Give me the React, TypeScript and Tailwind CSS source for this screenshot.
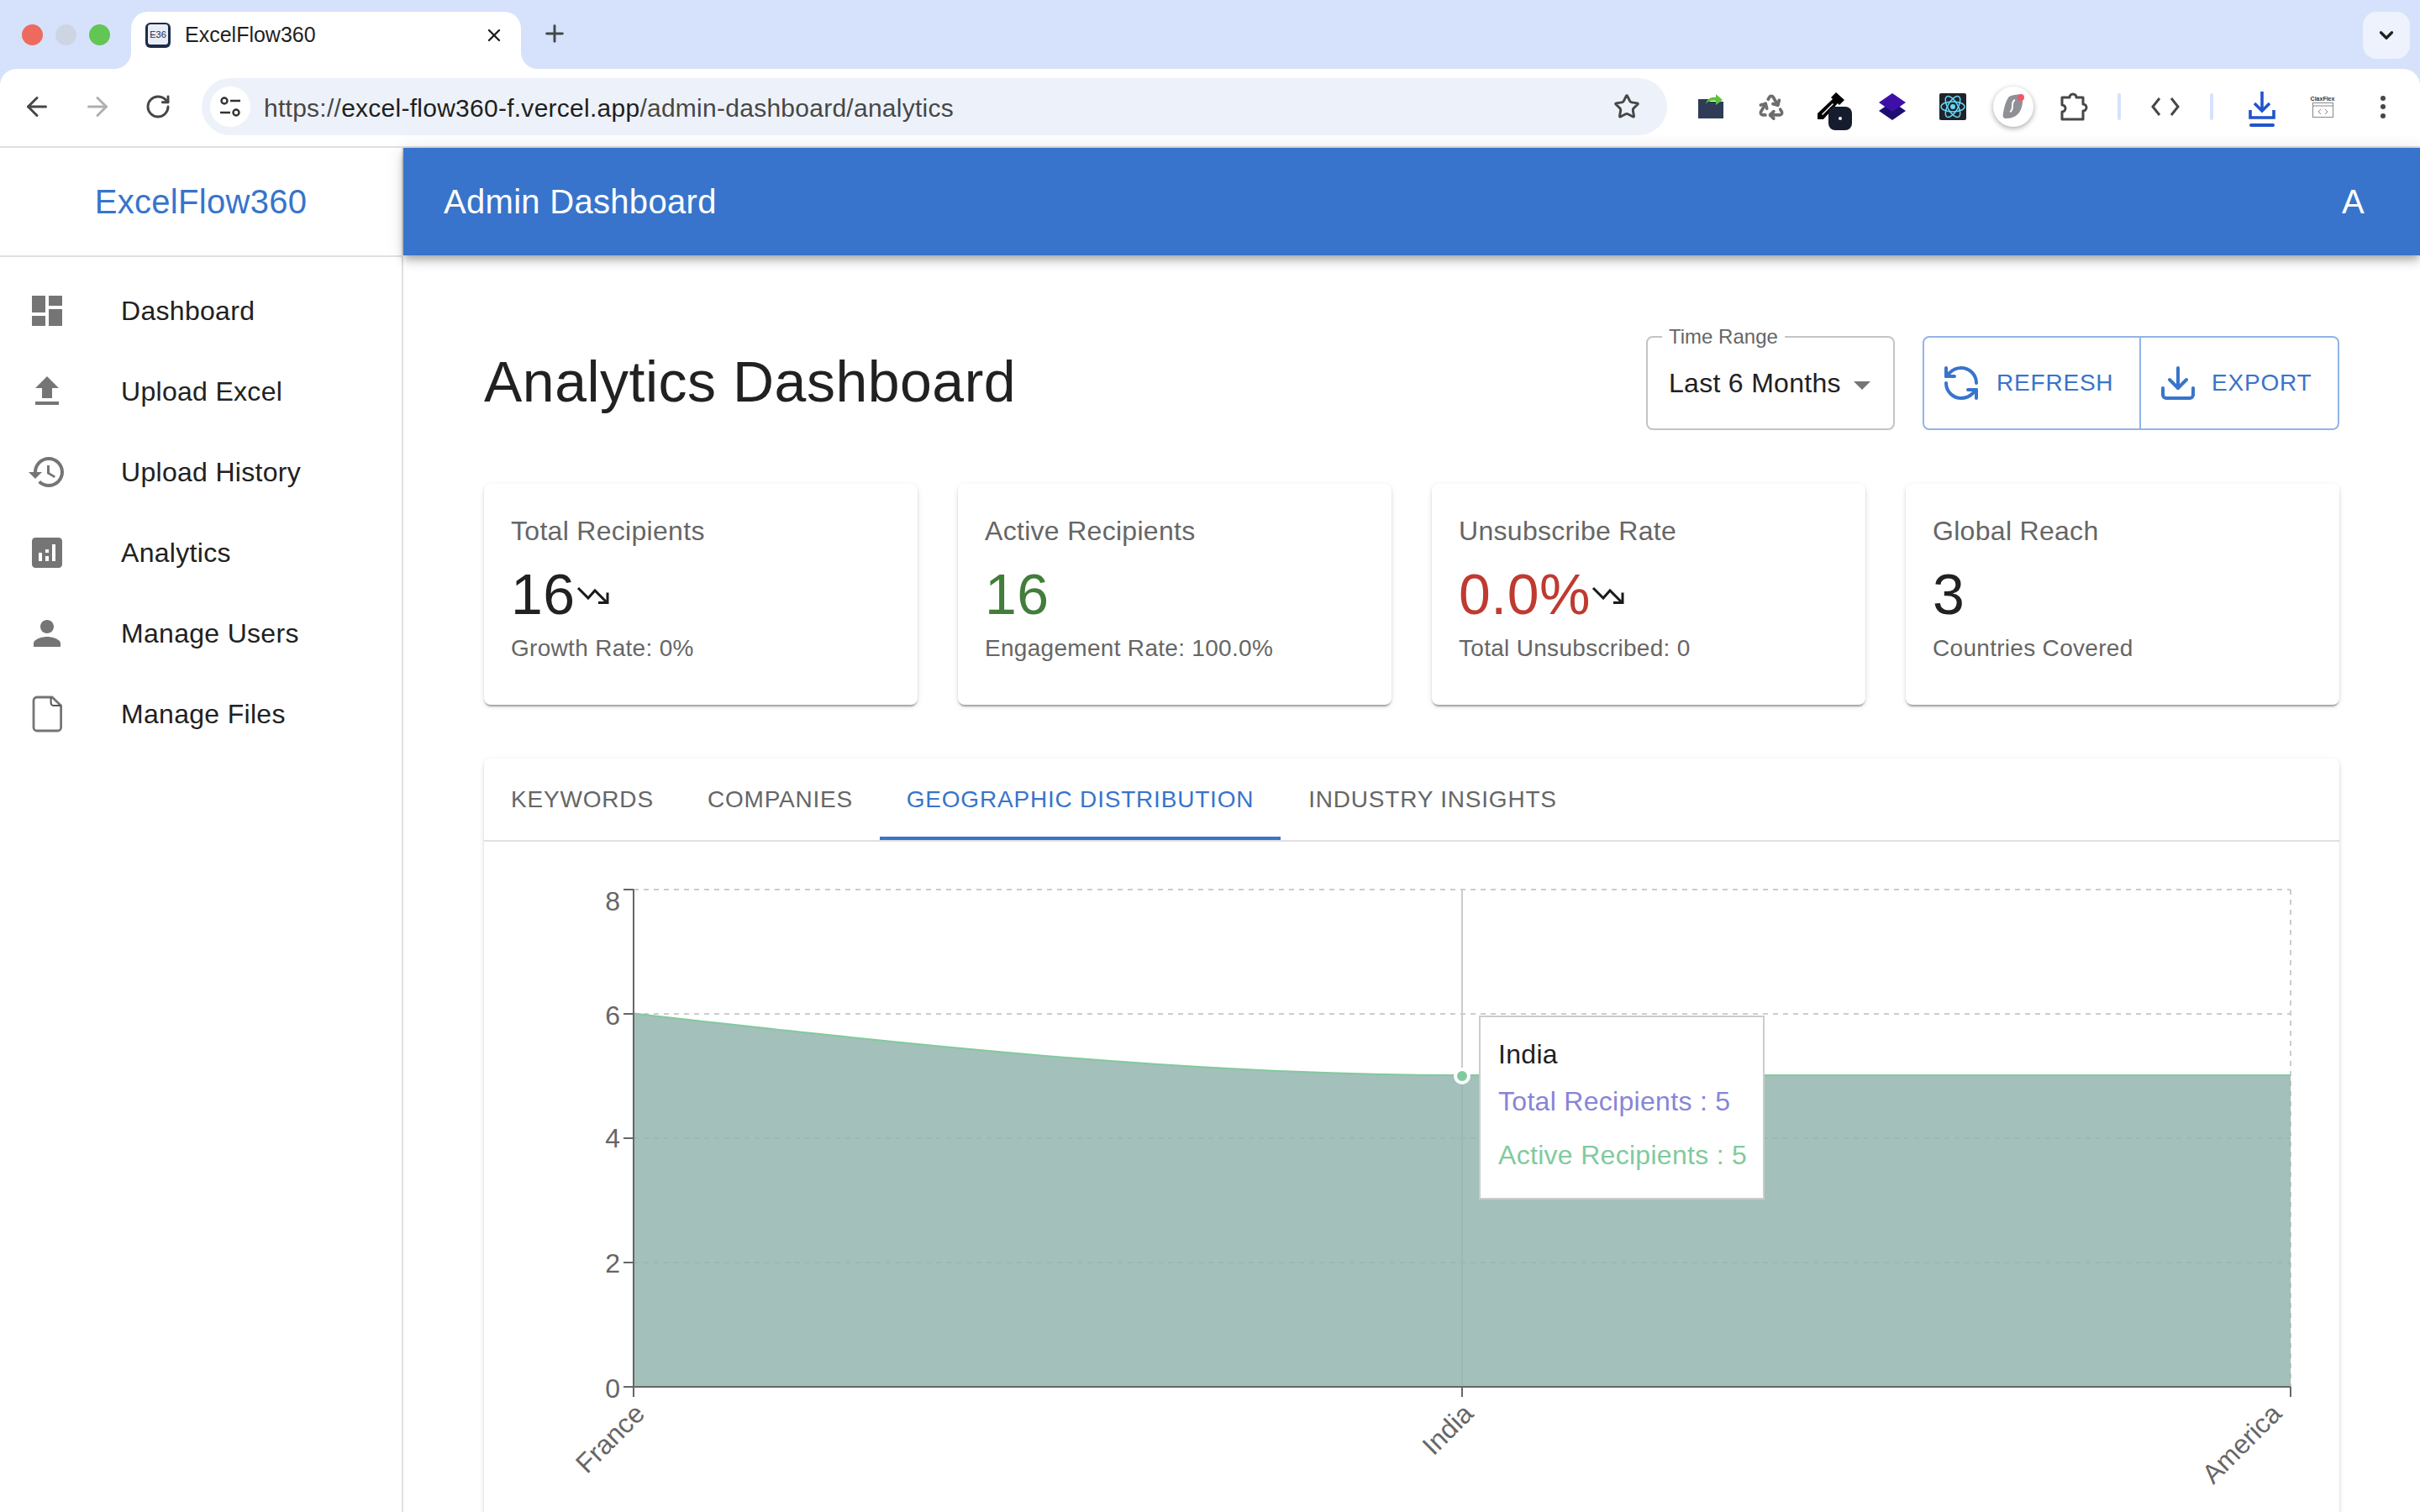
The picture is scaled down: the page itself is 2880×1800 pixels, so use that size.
import React from 'react';
import { ArrowLeft, ArrowRight, ChevronDown, Download, Plus, Recycle, RefreshCcw, RotateCw, Star, X } from 'lucide-react';

const navItems = [
  { label: 'Dashboard', path: 'M3 13h8V3H3zm0 8h8v-6H3zm10 0h8V11h-8zm0-18v6h8V3z' },
  { label: 'Upload Excel', path: 'M9 16h6v-6h4l-7-7-7 7h4zm-4 2h14v2H5z' },
  {
    label: 'Upload History',
    path: 'M13 3c-4.97 0-9 4.03-9 9H1l3.89 3.89.07.14L9 12H6c0-3.87 3.13-7 7-7s7 3.13 7 7-3.13 7-7 7c-1.93 0-3.68-.79-4.94-2.06l-1.42 1.42C8.27 19.99 10.51 21 13 21c4.97 0 9-4.03 9-9s-4.03-9-9-9zm-1 5v5l4.28 2.54.72-1.21-3.5-2.08V8H12z',
  },
  {
    label: 'Analytics',
    path: 'M19 3H5c-1.1 0-2 .9-2 2v14c0 1.1.9 2 2 2h14c1.1 0 2-.9 2-2V5c0-1.1-.9-2-2-2zM9 17H7v-5h2v5zm4 0h-2v-3h2v3zm0-5h-2v-2h2v2zm4 5h-2V7h2v10z',
  },
  { label: 'Manage Users', path: 'M12 12c2.21 0 4-1.79 4-4s-1.79-4-4-4-4 1.79-4 4 1.79 4 4 4zm0 2c-2.67 0-8 1.34-8 4v2h16v-2c0-2.66-5.33-4-8-4z' },
];

const stats = [
  { label: 'Total Recipients', value: '16', color: 'text-[#212121]', sub: 'Growth Rate: 0%', trend: true },
  { label: 'Active Recipients', value: '16', color: 'text-[#427d3b]', sub: 'Engagement Rate: 100.0%', trend: false },
  { label: 'Unsubscribe Rate', value: '0.0%', color: 'text-[#bf3a30]', sub: 'Total Unsubscribed: 0', trend: true },
  { label: 'Global Reach', value: '3', color: 'text-[#212121]', sub: 'Countries Covered', trend: false },
];

const tabs = [
  { label: 'KEYWORDS', width: 'w-[234px]', active: false },
  { label: 'COMPANIES', width: 'w-[237px]', active: false },
  { label: 'GEOGRAPHIC DISTRIBUTION', width: 'w-[477px]', active: true },
  { label: 'INDUSTRY INSIGHTS', width: 'w-[362px]', active: false },
];

const cardShadow = 'shadow-[0_4px_2px_-2px_rgba(0,0,0,0.2),0_2px_2px_0_rgba(0,0,0,0.14),0_2px_6px_0_rgba(0,0,0,0.12)]';

const BrowserChrome: React.FC = () => (
  <div className="bg-[#d6e2fb]">
    <div className="flex h-[82px] items-start">
      <div className="flex h-[82px] w-[156px] items-start gap-[15px] pl-[26px] pt-[29px]">
        <div className="h-[25px] w-[25px] rounded-full bg-[#ee6a5f]" />
        <div className="h-[25px] w-[25px] rounded-full bg-[#cdd5e2]" />
        <div className="h-[25px] w-[25px] rounded-full bg-[#62c554]" />
      </div>
      <div className="relative mt-[14px] flex h-[68px] w-[464px] items-center rounded-t-[20px] bg-white pb-[12px] pl-[16px]">
        <div className="absolute bottom-0 left-[-20px] h-5 w-5 bg-white">
          <div className="h-5 w-5 rounded-br-[20px] bg-[#d6e2fb]" />
        </div>
        <div className="absolute bottom-0 right-[-20px] h-5 w-5 bg-white">
          <div className="h-5 w-5 rounded-bl-[20px] bg-[#d6e2fb]" />
        </div>
        <svg width="32" height="32" viewBox="0 0 32 32">
          <rect x="1" y="1" width="30" height="30" rx="6" fill="#1e2a4a" />
          <rect x="4" y="3" width="24" height="24" rx="3" fill="#e8edf5" />
          <text x="16" y="19" fontSize="11" textAnchor="middle" fill="#1e2a4a" fontFamily="Liberation Sans, sans-serif">E36</text>
        </svg>
        <span className="ml-[16px] text-[25px] text-[#1f1f1f]">ExcelFlow360</span>
        <X className="ml-auto mr-[20px] text-[#1f1f1f]" size={24} strokeWidth={2.4} />
      </div>
      <Plus className="ml-[24px] mt-[24px] text-[#444746]" size={32} strokeWidth={2.2} />
      <div className="ml-auto mr-[12px] mt-[14px] flex h-[56px] w-[56px] items-center justify-center rounded-[16px] bg-[#edf2fc]">
        <ChevronDown className="text-[#1f1f1f]" size={26} strokeWidth={3} />
      </div>
    </div>
    <div className="flex h-[94px] items-center rounded-t-[20px] border-b-2 border-[#dde1e6] bg-white pb-[2px]">
      <div className="flex w-[232px] shrink-0 items-center pl-[8px]">
        <div className="flex w-[72px] justify-center">
          <ArrowLeft className="text-[#474747]" size={36} strokeWidth={2} />
        </div>
        <div className="flex w-[72px] justify-center">
          <ArrowRight className="text-[#b0b0b0]" size={36} strokeWidth={2} />
        </div>
        <div className="flex w-[72px] justify-center">
          <RotateCw className="text-[#474747]" size={32} strokeWidth={2.2} />
        </div>
      </div>
      <div className="ml-[8px] flex h-[68px] w-[1744px] shrink-0 items-center rounded-[34px] bg-[#edf2fa] pl-[10px] pr-[32px]">
        <div className="flex h-[48px] w-[48px] items-center justify-center rounded-full bg-white">
          <svg width="28" height="28" viewBox="0 0 28 28" fill="none" stroke="#333" strokeWidth="2.4">
            <circle cx="7" cy="7" r="3.5" />
            <path d="M14 7h12M2 21h12" />
            <circle cx="21" cy="21" r="3.5" />
          </svg>
        </div>
        <span className="ml-[16px] pt-[2px] text-[30px] tracking-[0.26px] text-[#474747]">
          https://<span className="text-[#1f1f1f]">excel-flow360-f.vercel.app</span>/admin-dashboard/analytics
        </span>
        <Star className="ml-auto text-[#474747]" size={32} strokeWidth={2.2} />
      </div>
      <div className="ml-[16px] flex items-center">
        <div className="flex w-[72px] justify-center">
          <svg width="32" height="30" viewBox="0 0 32 30">
            <path d="M1 6h12l2 3h16v20H1z" fill="#2f3b57" />
            <path d="M10 12c1-6 6-9 12-8V0l8 7-8 6V8c-5-1-9 0-12 4z" fill="#5fc23c" />
          </svg>
        </div>
        <div className="flex w-[72px] justify-center">
          <Recycle className="text-[#6d6d6d]" size={34} strokeWidth={2.6} />
        </div>
        <div className="relative flex h-[48px] w-[72px] justify-center pt-[7px]">
          <svg width="32" height="32" viewBox="0 0 32 32" className="mr-[3px]">
            <path d="M22 0l10 9-6 6-2-2L7 32H0v-7L18 8l-2-2z" fill="#000" />
            <path d="M5 26l13-13 1 1L6 27z" fill="#fff" />
          </svg>
          <div className="absolute left-[32px] top-[24px] flex h-[28px] w-[28px] items-center justify-center rounded-[8px] bg-[#151c2e]">
            <div className="h-[4px] w-[4px] rounded-full bg-white" />
          </div>
        </div>
        <div className="flex w-[72px] justify-center">
          <svg width="32" height="32" viewBox="0 0 32 32">
            <path d="M0 21l16-11 16 11-16 11z" fill="#1c0f70" />
            <path d="M16 0l16 11-16 11L0 11z" fill="#3f10a8" />
          </svg>
        </div>
        <div className="flex w-[72px] justify-center">
          <svg width="32" height="32" viewBox="0 0 32 32">
            <rect width="32" height="32" rx="2" fill="#20232a" />
            <g fill="none" stroke="#61dafb" strokeWidth="1.5">
              <ellipse cx="16" cy="16" rx="14" ry="6" />
              <ellipse cx="16" cy="16" rx="14" ry="6" transform="rotate(60 16 16)" />
              <ellipse cx="16" cy="16" rx="14" ry="6" transform="rotate(120 16 16)" />
            </g>
            <circle cx="16" cy="16" r="3" fill="#61dafb" />
          </svg>
        </div>
        <div className="flex w-[72px] justify-center">
          <div className="flex h-[48px] w-[48px] items-center justify-center rounded-full bg-white shadow-[0_2px_6px_rgba(0,0,0,0.35)]">
            <svg width="26" height="30" viewBox="0 0 26 30">
              <path d="M8 3c4-2 10-3 15-2 2 7 1 15-3 21-3 4-8 7-15 7-4 0-5-2-4-6 1-7 3-15 7-20z" fill="#8f9096" />
              <path d="M15 7c-3 1-3 4-3 7s0 6-3 7" fill="none" stroke="#fff" strokeWidth="2" />
              <circle cx="22" cy="4" r="4" fill="#f0566a" />
            </svg>
          </div>
        </div>
        <div className="flex w-[72px] justify-center">
          <svg width="34" height="34" viewBox="0 0 34 34" fill="none" stroke="#474747" strokeWidth="3" strokeLinejoin="round">
            <path d="M3 6H12a4 4 0 0 1 8 0H28V14a4 4 0 0 1 0 8V32H3V23a4 4 0 0 0 0-8z" />
          </svg>
        </div>
        <div className="ml-[16px] h-[32px] w-[4px] rounded-full bg-[#d6e2fb]" />
        <div className="ml-[17px] flex w-[72px] justify-center">
          <svg width="34" height="22" viewBox="0 0 34 22" fill="none" stroke="#474747" strokeWidth="3">
            <path d="M10 1L2 11l8 10M24 1l8 10-8 10" />
          </svg>
        </div>
        <div className="ml-[17px] h-[32px] w-[4px] rounded-full bg-[#d6e2fb]" />
        <div className="ml-[22px] flex w-[72px] justify-center">
          <svg width="32" height="42" viewBox="0 0 32 42" className="mt-[6px]" fill="none" stroke="#2353cc" strokeWidth="3.6">
            <path d="M16 0v22M7 14l9 9 9-9" />
            <path d="M2 22v9h28v-9" />
            <path d="M3 40h26" strokeWidth="4" strokeLinecap="round" />
          </svg>
        </div>
        <div className="flex w-[72px] flex-col items-center">
          <span className="text-[7px] font-bold leading-[8px] text-[#333]">ClaxFlex</span>
          <svg width="25" height="18" viewBox="0 0 25 18" fill="none" stroke="#888" strokeWidth="1">
            <rect x="0.5" y="0.5" width="24" height="17" />
            <path d="M0.5 4h24M10 8l-3 3 3 3M15 8l3 3-3 3" />
          </svg>
        </div>
        <div className="flex w-[72px] flex-col items-center gap-[4.5px]">
          <div className="h-[6px] w-[6px] rounded-full bg-[#474747]" />
          <div className="h-[6px] w-[6px] rounded-full bg-[#474747]" />
          <div className="h-[6px] w-[6px] rounded-full bg-[#474747]" />
        </div>
      </div>
    </div>
  </div>
);

const Sidebar: React.FC = () => (
  <aside className="h-full w-[480px] shrink-0 border-r-2 border-[#e0e0e0] bg-white">
    <div className="flex h-[130px] items-center justify-center border-b-2 border-[#e0e0e0] text-[40px] tracking-[0.3px] text-[#3874cb]">
      ExcelFlow360
    </div>
    <nav className="pt-[16px]">
      {navItems.map((item) => (
        <div key={item.label} className="flex h-[96px] items-center pl-[32px] text-[32px] tracking-[0.3px] text-[#212121]">
          <div className="w-[112px] shrink-0">
            <svg width="48" height="48" viewBox="0 0 24 24" fill="#757575">
              <path d={item.path} />
            </svg>
          </div>
          {item.label}
        </div>
      ))}
      <div className="flex h-[96px] items-center pl-[32px] text-[32px] tracking-[0.3px] text-[#212121]">
        <div className="w-[112px] shrink-0">
          <svg width="48" height="48" viewBox="0 0 24 24" fill="none" stroke="#757575" strokeWidth="1.4">
            <path d="M6 2h9l5.300 5v13a2 2 0 0 1-2 2H6a2 2 0 0 1-2-2V4a2 2 0 0 1 2-2z" />
            <path d="M14.300 2.200v3.200a1.600 1.600 0 0 0 1.600 1.600h4.200" stroke="#555" strokeWidth="1" />
          </svg>
        </div>
        Manage Files
      </div>
    </nav>
  </aside>
);

const TrendIcon: React.FC = () => (
  <svg width="42" height="24" viewBox="0 0 42 24" fill="none" stroke="#1a1a1a" strokeWidth="3" className="mt-[4px]">
    <path d="M3 3L15 15l8-9L37 20" />
    <path d="M38 8.500V20.500H27" />
  </svg>
);

const AreaChart: React.FC = () => (
  <svg width="2208" height="798" viewBox="576 1002 2208 798" className="block" fontFamily="Liberation Sans, Arial, sans-serif" fontSize="32" fill="#666">
    <g stroke="#ccc" strokeWidth="2" strokeDasharray="6 6" fill="none">
      <path d="M754 1059H2726M754 1207H2726M754 1355H2726M754 1503H2726M2726 1059V1651" />
    </g>
    <path d="M1740 1059V1651" stroke="#ccc" strokeWidth="2" />
    <path d="M754 1206.500C1082.700 1243.500 1411.300 1280 1740 1280H2726V1651H754Z" fill="#91b4ae" fillOpacity="0.84" />
    <path d="M754 1206.500C1082.700 1243.500 1411.300 1280 1740 1280H2726" fill="none" stroke="#82ca9d" strokeWidth="2" />
    <g stroke="#666" strokeWidth="2" fill="none">
      <path d="M754 1059V1651H2726" />
      <path d="M742 1059H754M742 1207H754M742 1355H754M742 1503H754M742 1651H754" />
      <path d="M754 1651V1663M1740 1651V1663M2726 1651V1663" />
    </g>
    <g textAnchor="end">
      <text x="738" y="1084">8</text>
      <text x="738" y="1220">6</text>
      <text x="738" y="1366">4</text>
      <text x="738" y="1515">2</text>
      <text x="738" y="1664">0</text>
    </g>
    <g textAnchor="end">
      <text transform="translate(769 1685) rotate(-45)">France</text>
      <text transform="translate(1755 1685) rotate(-45)">India</text>
      <text transform="translate(2717 1685) rotate(-45)">America</text>
    </g>
    <circle cx="1740" cy="1281" r="8" fill="#82ca9d" stroke="#fff" strokeWidth="4" />
  </svg>
);

export default function App() {
  return (
    <div className="flex h-[1800px] w-[2880px] flex-col overflow-hidden bg-white font-['Liberation_Sans',Arial,sans-serif]">
      <BrowserChrome />
      <div className="flex min-h-0 flex-1">
        <Sidebar />
        <div className="flex min-w-0 flex-1 flex-col">
          <header className="z-10 flex h-[128px] shrink-0 items-center justify-between bg-[#3874cb] pl-[48px] pr-[66px] text-[40px] tracking-[0.3px] text-white shadow-[0_4px_8px_-2px_rgba(0,0,0,0.2),0_8px_10px_0_rgba(0,0,0,0.14),0_2px_20px_0_rgba(0,0,0,0.12)]">
            <span>Admin Dashboard</span>
            <span>A</span>
          </header>
          <main className="min-h-0 flex-1 overflow-hidden px-[96px] pt-[96px]">
            <div className="flex h-[112px] items-center justify-between">
              <h1 className="pb-[4px] text-[68px] tracking-[0.5px] text-[#212121]">Analytics Dashboard</h1>
              <div className="flex items-center gap-[33px]">
                <div className="relative flex h-[112px] w-[296px] items-center rounded-[8px] border-2 border-[#c4c4c4] pl-[25px]">
                  <span className="absolute left-[17px] top-[-15px] bg-white px-[8px] text-[24px] leading-[28px] text-[#666]">Time Range</span>
                  <span className="text-[32px] tracking-[0.3px] text-[#212121]">Last 6 Months</span>
                  <div className="absolute right-[27px] top-[52px] h-0 w-0 border-x-[10px] border-t-[10px] border-x-transparent border-t-[#757575]" />
                </div>
                <div className="flex h-[112px] w-[496px] rounded-[8px] border-2 border-[#92b4e6] text-[28px] tracking-[0.8px] text-[#3874cb]">
                  <div className="flex w-[258px] items-center gap-[18px] border-r-2 border-[#92b4e6] pl-[20px]">
                    <RefreshCcw size={48} strokeWidth={2} />
                    REFRESH
                  </div>
                  <div className="flex flex-1 items-center gap-[16px] pl-[20px]">
                    <Download size={48} strokeWidth={2} />
                    EXPORT
                  </div>
                </div>
              </div>
            </div>

            <div className="mt-[64px] grid grid-cols-4 gap-[48px]">
              {stats.map((stat) => (
                <div key={stat.label} className={`h-[263px] rounded-[8px] bg-white p-[32px] ${cardShadow}`}>
                  <div className="mb-[9px] text-[32px] leading-[48px] tracking-[0.3px] text-[#666]">{stat.label}</div>
                  <div className={`flex h-[84px] items-center text-[68px] leading-[84px] tracking-[0.5px] ${stat.color}`}>
                    {stat.value}
                    {stat.trend && <TrendIcon />}
                  </div>
                  <div className="mt-[3px] text-[28px] leading-[40px] tracking-[0.3px] text-[#666]">{stat.sub}</div>
                </div>
              ))}
            </div>

            <div className={`relative mt-[64px] h-[1000px] rounded-[8px] bg-white ${cardShadow}`}>
              <div className="flex h-[99px] border-b-2 border-[#e0e0e0] text-[28px] tracking-[0.8px] text-[#666]">
                {tabs.map((tab) => (
                  <div
                    key={tab.label}
                    className={`flex h-[97px] items-center justify-center ${tab.width} ${tab.active ? 'border-b-4 border-[#3874cb] pt-[4px] text-[#3874cb]' : ''}`}
                  >
                    {tab.label}
                  </div>
                ))}
              </div>
              <AreaChart />
              <div className="absolute left-[1184px] top-[306px] h-[219px] w-[340px] border-2 border-[#ccc] bg-white pl-[21px] pt-[20px] text-[32px] tracking-[0.3px]">
                <div className="leading-[48px] text-[#1f1f1f]">India</div>
                <div className="mt-[8px] leading-[48px] text-[#8884d8]">Total Recipients : 5</div>
                <div className="mt-[16px] leading-[48px] text-[#82ca9d]">Active Recipients : 5</div>
              </div>
            </div>
          </main>
        </div>
      </div>
    </div>
  );
}
